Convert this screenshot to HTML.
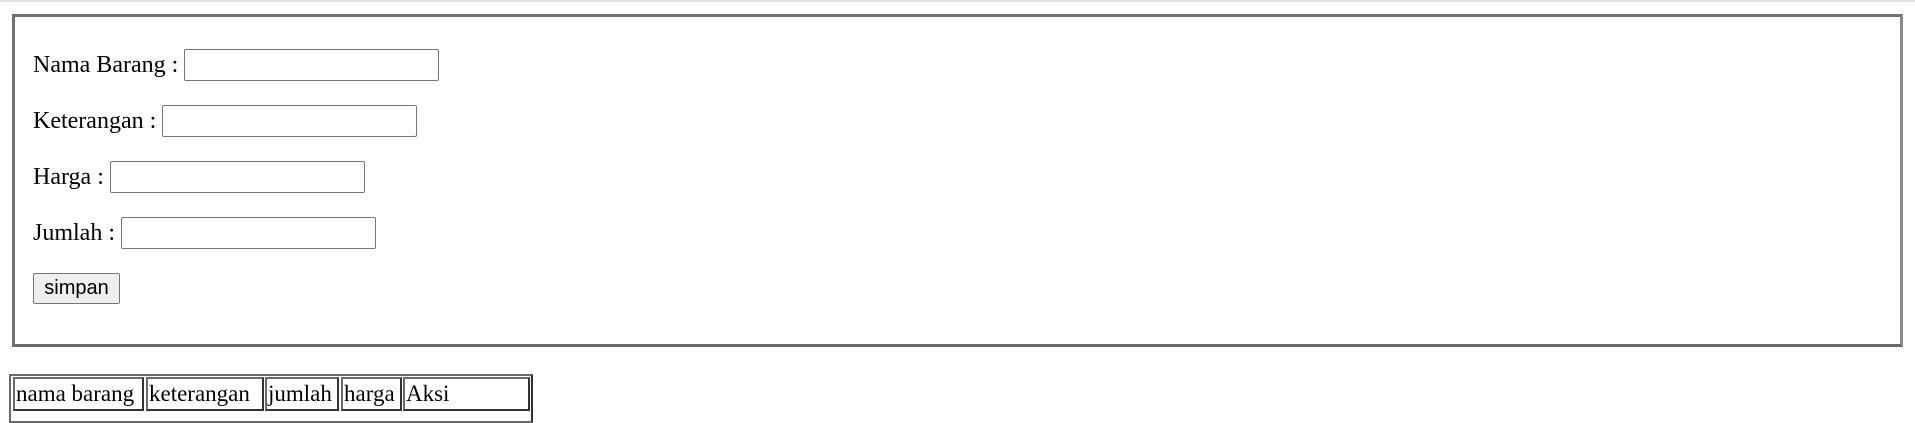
<!DOCTYPE html>
<html><head><style>
body{margin:0;width:1915px;height:413px;overflow:hidden;background:#fff;font-family:"Liberation Serif",serif;font-size:24px;color:#000;position:relative}
.a{position:absolute}
.lbl{position:absolute;left:33px;line-height:32px;white-space:nowrap}
.inp{position:absolute;width:253px;height:30px;border:1px solid #767676;border-radius:2px;background:#fff}
.td{position:absolute;top:377px;height:30px;border:2px solid #333;border-left-color:#6a6a6a;border-top-color:#6a6a6a;line-height:30px;padding-left:1px;white-space:nowrap;overflow:hidden;font-size:23px}
</style></head><body>
<div class="a" style="left:0;top:0;width:1915px;height:2px;background:#e3e3e3"></div>
<div class="a" style="left:12px;top:14px;width:1885px;height:327px;border:3px solid #707070;border-right-color:#8a8a8a;border-bottom-color:#6a6a6a"></div>

<div class="lbl" style="top:49px">Nama Barang :</div><div class="inp" style="left:184px;top:49px"></div>
<div class="lbl" style="top:105px">Keterangan :</div><div class="inp" style="left:162px;top:105px"></div>
<div class="lbl" style="top:161px">Harga :</div><div class="inp" style="left:110px;top:161px"></div>
<div class="lbl" style="top:217px">Jumlah :</div><div class="inp" style="left:121px;top:217px"></div>
<div class="a" style="left:33px;top:273px;width:85px;height:29px;border:1px solid #767676;border-radius:2px;background:#efefef;font-family:'Liberation Sans',sans-serif;font-size:20px;line-height:29px;text-align:center">simpan</div>

<div class="a" style="left:9px;top:374px;width:520px;height:45px;border:2px solid #6a6a6a;border-right-color:#333"></div>
<div class="td" style="left:13px;width:126px">nama barang</div>
<div class="td" style="left:146px;width:113px">keterangan</div>
<div class="td" style="left:265px;width:69px">jumlah</div>
<div class="td" style="left:341px;width:56px">harga</div>
<div class="td" style="left:403px;width:122px">Aksi</div>
</body></html>
